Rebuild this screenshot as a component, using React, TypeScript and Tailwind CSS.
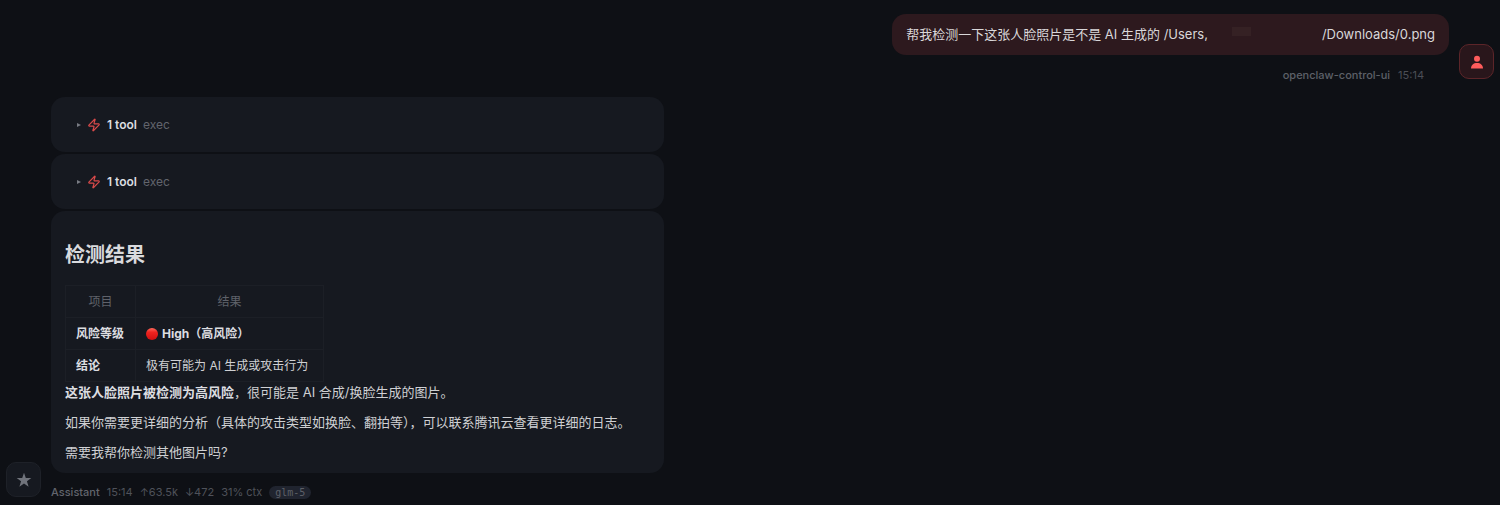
import type { ReactNode } from "react";
import { Zap } from "lucide-react";

const tools = [
  { id: "tool-1", label: "1 tool", name: "exec" },
  { id: "tool-2", label: "1 tool", name: "exec" },
];

const usage = ["↑63.5k", "↓472", "31% ctx"];

function UserIcon() {
  return (
    <svg viewBox="0 0 16 16" className="size-4" fill="currentColor" aria-hidden="true">
      <circle cx="8" cy="4.800" r="3" />
      <path d="M2 14.600c0-3.600 2.600-5.600 6-5.600s6 2 6 5.600z" />
    </svg>
  );
}

function StarIcon() {
  return (
    <svg viewBox="0 0 24 24" className="size-4" fill="currentColor" aria-hidden="true">
      <path d="M12 1l2.700 8H23l-6.600 5 2.500 8.200L12 17.200l-6.900 5L7.600 14 1 9h8.300z" />
    </svg>
  );
}

function RedDot() {
  return (
    <svg viewBox="0 0 12 12" className="size-3 shrink-0" role="img" aria-label="high">
      <defs>
        <linearGradient id="dot" x1="0" y1="0" x2="0" y2="1">
          <stop offset="0" stopColor="#ff6a5c" />
          <stop offset="0.35" stopColor="#ee2420" />
          <stop offset="1" stopColor="#d00f10" />
        </linearGradient>
      </defs>
      <circle cx="6" cy="6" r="6" fill="url(#dot)" />
    </svg>
  );
}

function Card({ children, className = "" }: { children: ReactNode; className?: string }) {
  return <div className={`rounded-[14px] bg-[#161920] ${className}`}>{children}</div>;
}

function ToolCard({ label, name }: { label: string; name: string }) {
  return (
    <Card className="px-6 py-4">
      <button type="button" className="flex h-[23px] items-center gap-[6px] text-[12px]">
        <svg viewBox="0 0 4 4" className="ml-[2px] size-[4px]" fill="#777a82" aria-hidden="true">
          <path d="M0 0l4 2-4 2z" />
        </svg>
        <Zap className="size-[14px] text-[#d94a4a]" strokeWidth={2} />
        <span className="font-semibold text-[#dcdde0]">{label}</span>
        <span className="text-[#62656d]">{name}</span>
      </button>
    </Card>
  );
}

function UserMessage() {
  return (
    <section className="flex items-end justify-end gap-[10px]">
      <div className="flex flex-col items-end">
        <div className="flex h-[41px] items-center rounded-[14px] bg-[#2d191e] px-[14px] text-[13px] text-[#d9d7d9]">
          <span>帮我检测一下这张人脸照片是不是 AI 生成的 /Users,</span>
          <span className="flex w-[114px] self-stretch pt-[13px] pl-6" aria-hidden="true">
            <span className="h-[9px] w-[19px] bg-[#352124]" />
          </span>
          <span>/Downloads/0.png</span>
        </div>
        <div className="mt-3 mr-[25px] flex h-4 items-center gap-2 text-[11px] text-[#5d6068]">
          <span className="font-medium">openclaw-control-ui</span>
          <time className="text-[#4b4e56]">15:14</time>
        </div>
      </div>
      <div className="mb-1 flex size-[35px] shrink-0 items-center justify-center rounded-[10px] border border-[#5c2529] bg-[#29161b] text-[#ff5c5c]">
        <UserIcon />
      </div>
    </section>
  );
}

function ResultTable() {
  return (
    <table className="mt-[15px] border-collapse text-[12px] leading-[19px] text-[#cfd0d3] [&_td]:border [&_td]:border-[#1c1f26] [&_td]:px-[10px] [&_td]:py-[6px] [&_th]:border [&_th]:border-[#1c1f26] [&_th]:px-[10px] [&_th]:py-[6px]">
      <thead>
        <tr className="text-[#5f626a]">
          <th className="w-[70px] font-normal">项目</th>
          <th className="w-[188px] font-normal">结果</th>
        </tr>
      </thead>
      <tbody>
        <tr className="font-bold text-[#dcdde0]">
          <td>风险等级</td>
          <td>
            <span className="flex items-center gap-1">
              <RedDot />
              High（高风险）
            </span>
          </td>
        </tr>
        <tr>
          <td className="font-bold text-[#dcdde0]">结论</td>
          <td>极有可能为 AI 生成或攻击行为</td>
        </tr>
      </tbody>
    </table>
  );
}

function AssistantMessage() {
  return (
    <section className="mt-[14px] flex items-end gap-[10px]">
      <div className="mb-[3px] flex size-[35px] shrink-0 items-center justify-center rounded-[10px] border border-[#1e2128] bg-[#161920] text-[#70737b]">
        <StarIcon />
      </div>
      <div className="flex w-full max-w-[613px] flex-col gap-[2px]">
        {tools.map((tool) => (
          <ToolCard key={tool.id} label={tool.label} name={tool.name} />
        ))}
        <Card className="px-[14px] pt-[29px] pb-[11px] text-[13px] leading-5 text-[#cfd0d3]">
          <h2 className="text-[20px] leading-[30px] font-bold text-[#d9dadd]">检测结果</h2>
          <ResultTable />
          <div className="flex flex-col gap-[10px]">
            <p>
              <strong className="font-bold text-[#dcdde0]">这张人脸照片被检测为高风险</strong>
              ，很可能是 AI 合成/换脸生成的图片。
            </p>
            <p>如果你需要更详细的分析（具体的攻击类型如换脸、翻拍等），可以联系腾讯云查看更详细的日志。</p>
            <p>需要我帮你检测其他图片吗?</p>
          </div>
        </Card>
        <div className="mt-[9px] flex h-4 items-center gap-[7px] text-[11px] text-[#4f525a]">
          <span className="font-medium text-[#62656d]">Assistant</span>
          <time>15:14</time>
          {usage.map((item) => (
            <span key={item}>{item}</span>
          ))}
          <span className="rounded-full bg-[#20242f] px-[6px] font-['DejaVu_Sans_Mono',monospace] text-[10px] leading-[13px] text-[#5d6068]">
            glm-5
          </span>
        </div>
      </div>
    </section>
  );
}

export default function App() {
  return (
    <main
      lang="zh-CN"
      className="min-h-screen bg-[#0e1015] px-[6px] pt-[14px] font-['Inter','Noto_Sans_CJK_SC',sans-serif]"
    >
      <UserMessage />
      <AssistantMessage />
    </main>
  );
}
